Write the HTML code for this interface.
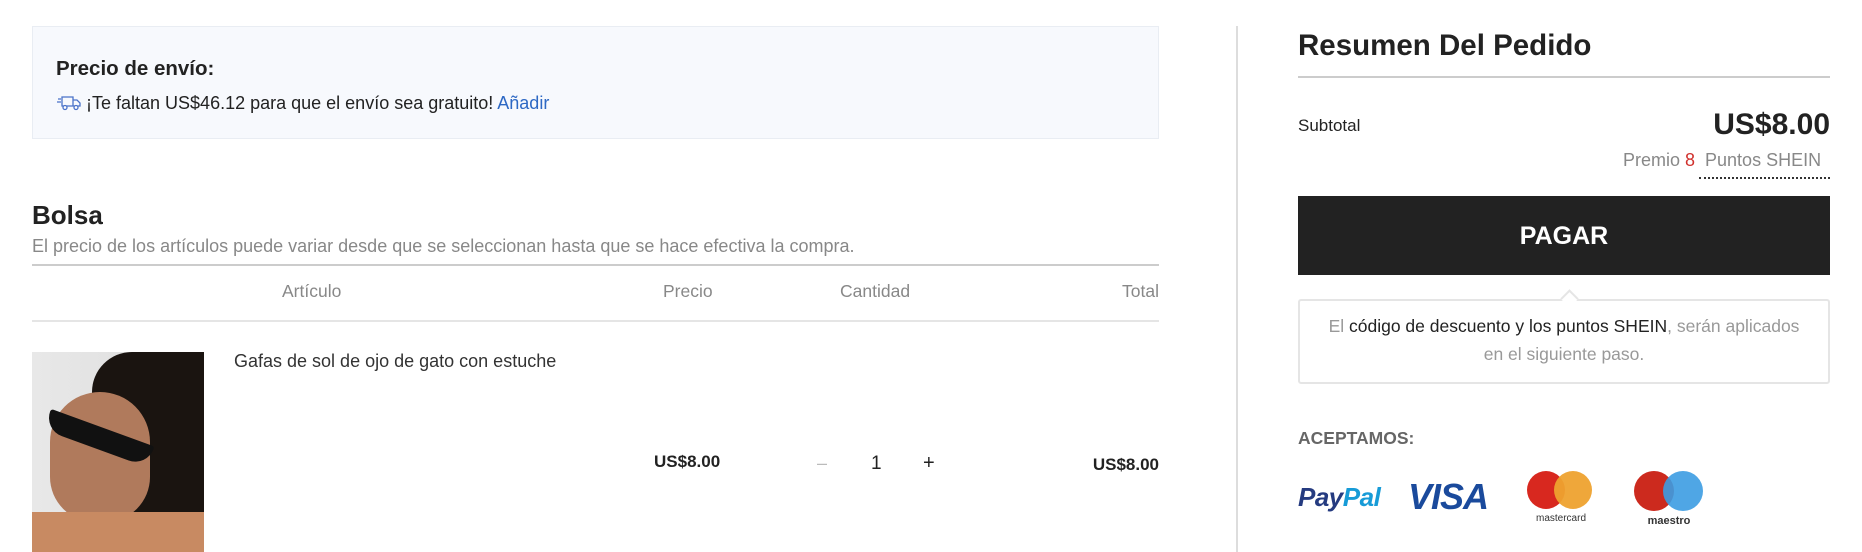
<!DOCTYPE html>
<html><head><meta charset="utf-8"><style>
*{margin:0;padding:0;box-sizing:border-box}
body{width:1862px;height:552px;overflow:hidden;background:#fff;font-family:"Liberation Sans",Arial,sans-serif;color:#222;position:relative}
.a{position:absolute;white-space:nowrap}
</style></head><body>
<div class="a" style="left:32px;top:26px;width:1127px;height:113px;background:#f7f9fd;border:1px solid #e9edf3"></div>
<div class="a" style="left:56px;top:57px;font-size:20.5px;font-weight:bold">Precio de envío:</div>
<svg class="a" style="left:57px;top:95px" width="24" height="16" viewBox="0 0 24 16" fill="none" stroke="#4a72c9" stroke-width="1.3"><path d="M5 2h11v9H5zM16 5h4l3 3v3h-7"/><circle cx="8" cy="12.5" r="2" fill="#fff"/><circle cx="19" cy="12.5" r="2" fill="#fff"/><path d="M1 4h3M0 7h4"/></svg>
<div class="a" style="left:86px;top:93px;font-size:18px">¡Te faltan US$46.12 para que el envío sea gratuito! <span style="color:#2d68c4">Añadir</span></div>

<div class="a" style="left:32px;top:200px;font-size:26px;font-weight:bold">Bolsa</div>
<div class="a" style="left:32px;top:236px;font-size:18px;color:#888">El precio de los artículos puede variar desde que se seleccionan hasta que se hace efectiva la compra.</div>
<div class="a" style="left:32px;top:264px;width:1127px;height:2px;background:#ccc"></div>
<div class="a" style="left:282px;top:281px;font-size:17.5px;color:#888">Artículo</div>
<div class="a" style="left:663px;top:281px;font-size:17.5px;color:#888">Precio</div>
<div class="a" style="left:840px;top:281px;font-size:17.5px;color:#888">Cantidad</div>
<div class="a" style="right:703px;top:281px;font-size:17.5px;color:#888">Total</div>
<div class="a" style="left:32px;top:320px;width:1127px;height:2px;background:#e5e5e5"></div>

<div class="a" style="left:32px;top:352px;width:172px;height:200px;background:linear-gradient(90deg,#e8e8e8,#dcdcdc);overflow:hidden">
<div style="position:absolute;left:60px;top:0;width:112px;height:200px;background:#1a1410;border-radius:40px 0 0 0"></div>
<div style="position:absolute;left:18px;top:40px;width:100px;height:130px;background:#b07a5c;border-radius:50px 50px 45px 45px"></div>
<div style="position:absolute;left:12px;top:75px;width:110px;height:22px;background:#111;transform:rotate(20deg);border-radius:4px 4px 30px 30px"></div>
<div style="position:absolute;left:0;top:160px;width:172px;height:40px;background:#c88a62"></div>
</div>
<div class="a" style="left:234px;top:351px;font-size:18px;color:#333">Gafas de sol de ojo de gato con estuche</div>
<div class="a" style="left:654px;top:452px;font-size:17px;font-weight:bold">US$8.00</div>
<div class="a" style="left:817px;top:453px;font-size:18px;color:#bbb">–</div>
<div class="a" style="left:871px;top:453px;font-size:19px">1</div>
<div class="a" style="left:923px;top:452px;font-size:20px">+</div>
<div class="a" style="right:703px;top:455px;font-size:17px;font-weight:bold">US$8.00</div>

<div class="a" style="left:1236px;top:26px;width:2px;height:526px;background:#ddd"></div>

<div class="a" style="left:1298px;top:29px;font-size:29.5px;font-weight:bold">Resumen Del Pedido</div>
<div class="a" style="left:1298px;top:76px;width:532px;height:2px;background:#ccc"></div>
<div class="a" style="left:1298px;top:116px;font-size:17px">Subtotal</div>
<div class="a" style="right:32px;top:108px;font-size:30px;font-weight:bold">US$8.00</div>
<div class="a" style="left:1623px;top:150px;font-size:18px;color:#888">Premio <span style="color:#d0312d">8</span>&nbsp;&nbsp;Puntos SHEIN</div>
<div class="a" style="left:1699px;top:177px;width:131px;border-top:2px dotted #333"></div>
<div class="a" style="left:1298px;top:196px;width:532px;height:79px;background:#222;color:#fff;font-size:25px;font-weight:bold;text-align:center;line-height:81px">PAGAR</div>
<div class="a" style="left:1298px;top:299px;width:532px;height:85px;border:2px solid #e5e5e5;border-radius:3px"></div>
<div class="a" style="left:1563px;top:292px;width:13px;height:13px;background:#fff;border-left:2px solid #e5e5e5;border-top:2px solid #e5e5e5;transform:rotate(45deg)"></div>
<div class="a" style="left:1298px;top:312px;width:532px;text-align:center;font-size:17.5px;line-height:28px;color:#999;white-space:normal;padding:0 22px">El <span style="color:#222">código de descuento y los puntos SHEIN</span>, serán aplicados en el siguiente paso.</div>
<div class="a" style="left:1298px;top:428px;font-size:17.5px;font-weight:bold;color:#666">ACEPTAMOS:</div>
<div class="a" style="left:1298px;top:482px;font-size:26px;font-weight:bold;font-style:italic;color:#253b80;letter-spacing:-0.5px">Pay<span style="color:#179bd7">Pal</span></div>
<div class="a" style="left:1408px;top:476px;font-size:36px;font-weight:bold;font-style:italic;color:#1a4a9c;letter-spacing:-1px">VISA</div>
<svg class="a" style="left:1526px;top:470px" width="70" height="56" viewBox="0 0 70 56"><circle cx="20" cy="20" r="19" fill="#d8281f"/><circle cx="47" cy="20" r="19" fill="#eea22f" opacity=".95"/><text x="35" y="51" font-size="10" text-anchor="middle" font-family="Liberation Sans" fill="#333">mastercard</text></svg>
<svg class="a" style="left:1633px;top:470px" width="75" height="58" viewBox="0 0 75 58"><circle cx="21" cy="21" r="20" fill="#cc2a1e"/><circle cx="50" cy="21" r="20" fill="#3c9ce2" opacity=".9"/><text x="36" y="54" font-size="11" font-weight="bold" text-anchor="middle" font-family="Liberation Sans" fill="#333">maestro</text></svg>
</body></html>
